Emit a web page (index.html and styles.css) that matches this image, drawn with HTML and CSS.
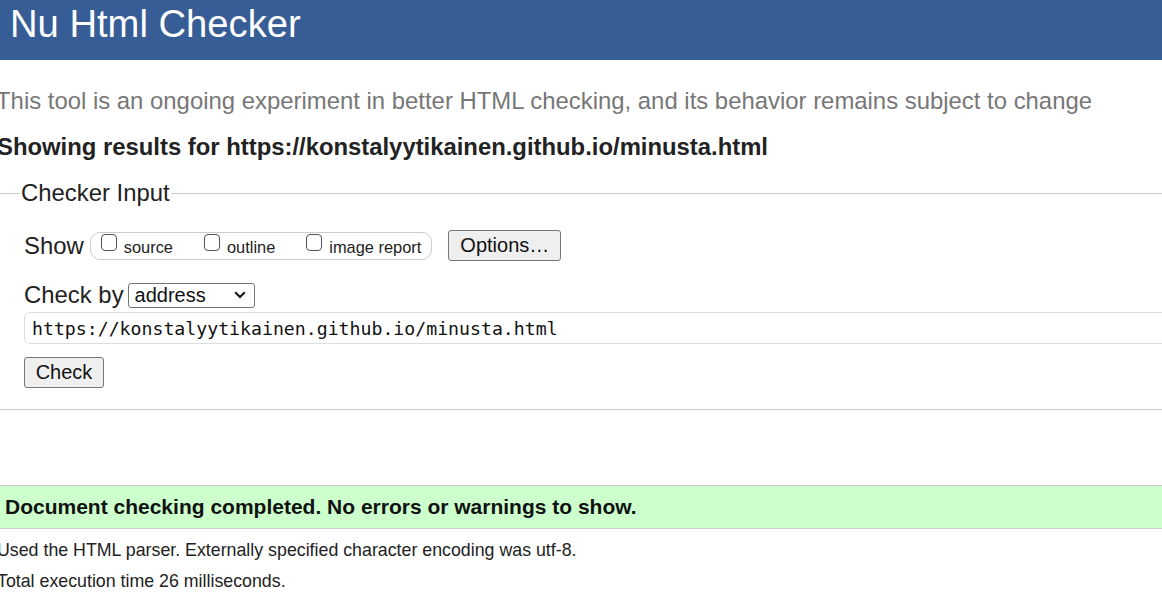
FILE: index.html
```html
<!DOCTYPE html>
<html lang="en">
<head>
<meta charset="utf-8">
<title>Nu Html Checker</title>
<link rel="stylesheet" href="styles.css">
</head>
<body>
<div class="page">
  <header class="topbar"><h1 class="title">Nu Html Checker</h1></header>
  <p class="intro">This tool is an ongoing experiment in better HTML checking, and its behavior remains subject to change</p>
  <p class="showing">Showing results for https://konstalyytikainen.github.io/minusta.html</p>
  <fieldset class="input-box">
    <legend class="legend">Checker Input</legend>
    <div class="row show-row">
      <span class="label">Show</span>
      <span class="group">
        <label class="opt"><input type="checkbox" class="cb">source</label>
        <label class="opt"><input type="checkbox" class="cb">outline</label>
        <label class="opt"><input type="checkbox" class="cb">image report</label>
      </span>
      <button class="btn options">Options…</button>
    </div>
    <div class="row by-row">
      <span class="label">Check by</span>
      <span class="sel-wrap">
        <select class="sel"><option>address</option></select>
        <svg class="chev" width="12" height="8" viewBox="0 0 12 8"><path d="M1.2 1.2 L6 6 L10.8 1.2" fill="none" stroke="#111" stroke-width="2"/></svg>
      </span>
    </div>
    <input class="url" type="text" value="https://konstalyytikainen.github.io/minusta.html">
    <div class="row"><button class="btn check">Check</button></div>
  </fieldset>
  <div class="success">Document checking completed. No errors or warnings to show.</div>
  <p class="details">Used the HTML parser. Externally specified character encoding was utf-8.</p>
  <p class="details">Total execution time 26 milliseconds.</p>
</div>
</body>
</html>
```
FILE: styles.css
```css
html, body {
  margin: 0;
  padding: 0;
  overflow: hidden;
  background: #fff;
}
body {
  font-family: "Liberation Sans", Arial, sans-serif;
  color: #222;
}
.page {
  margin-left: -4px;
  width: 1200px;
}
.topbar {
  background: #365d95;
  height: 60px;
  display: flex;
  align-items: center;
  padding-left: 14px;
}
.title {
  margin: 0;
  font-weight: normal;
  font-size: 38.2px;
  color: #fff;
  line-height: 1;
  padding-bottom: 12px;
}
.intro {
  margin: 27px 0 0 0;
  font-size: 23.9px;
  color: #777;
  line-height: 28px;
  white-space: nowrap;
}
.showing {
  margin: 18px 0 0 1px;
  font-size: 23.85px;
  font-weight: bold;
  color: #222;
  line-height: 28px;
  white-space: nowrap;
}
.input-box {
  margin: 18px 0 0 0;
  border: 0;
  border-top: 1px solid #ccc;
  border-bottom: 1px solid #ccc;
  padding: 23px 0 21px 28px;
}
.legend {
  font-size: 23.9px;
  line-height: 28px;
  padding: 0 1px;
  margin-left: -4px;
  color: #222;
}
.row {
  display: flex;
  align-items: center;
}
.show-row { height: 31px; }
.label {
  font-size: 23.9px;
  line-height: 28px;
  margin-right: 4px;
}
.show-row .label { margin-right: 5px; }
.group {
  display: flex;
  align-items: center;
  box-sizing: border-box;
  border: 1px solid #ccc;
  border-radius: 10px;
  height: 28px;
  padding: 0 10px 0 10px;
  margin-left: 1px;
}
.opt {
  display: flex;
  align-items: center;
  font-size: 16.4px;
  margin-right: 31px;
  padding-top: 4px;
  color: #222;
}
.opt:last-child { margin-right: 0; }
.cb {
  appearance: none;
  -webkit-appearance: none;
  box-sizing: border-box;
  width: 16px;
  height: 17px;
  border: 1px solid #555;
  border-radius: 4px;
  background: #fff;
  margin: -11px 7px 0 0;
}
.btn {
  font-family: "Liberation Sans", Arial, sans-serif;
  font-size: 20px;
  color: #111;
  background: #efefef;
  border: 1px solid #767676;
  border-radius: 3px;
  height: 31px;
  padding: 0 11px;
}
.options {
  margin-left: 16px;
  width: 113px;
}
.by-row {
  margin-top: 20px;
  height: 28px;
}
.sel-wrap {
  position: relative;
  display: inline-flex;
}
.sel {
  appearance: none;
  -webkit-appearance: none;
  font-family: "Liberation Sans", Arial, sans-serif;
  font-size: 20px;
  width: 127px;
  height: 25px;
  border: 1px solid #767676;
  border-radius: 3px;
  padding: 0 0 0 6px;
  background: #fff;
  color: #111;
}
.chev {
  position: absolute;
  left: 106px;
  top: 8px;
  pointer-events: none;
}
.url {
  display: block;
  box-sizing: border-box;
  margin-top: 3px;
  width: 1200px;
  height: 32px;
  border: 1px solid #ddd;
  border-radius: 6px;
  padding: 0 7px;
  font-family: "DejaVu Sans Mono", "Liberation Mono", monospace;
  font-size: 18.2px;
  color: #111;
}
.check {
  margin-top: 13px;
  width: 80px;
  padding: 0;
}
.success {
  margin-top: 75px;
  box-sizing: border-box;
  background: #ccffcc;
  border-top: 1px solid #ccc;
  border-bottom: 1px solid #ccc;
  height: 44px;
  display: flex;
  align-items: center;
  padding-left: 9px;
  font-size: 21px;
  font-weight: bold;
  color: #111;
}
.details {
  margin: 11px 0 0 1px;
  font-size: 17.8px;
  line-height: 21px;
  color: #222;
}
.details + .details { margin-top: 10px; }
```
